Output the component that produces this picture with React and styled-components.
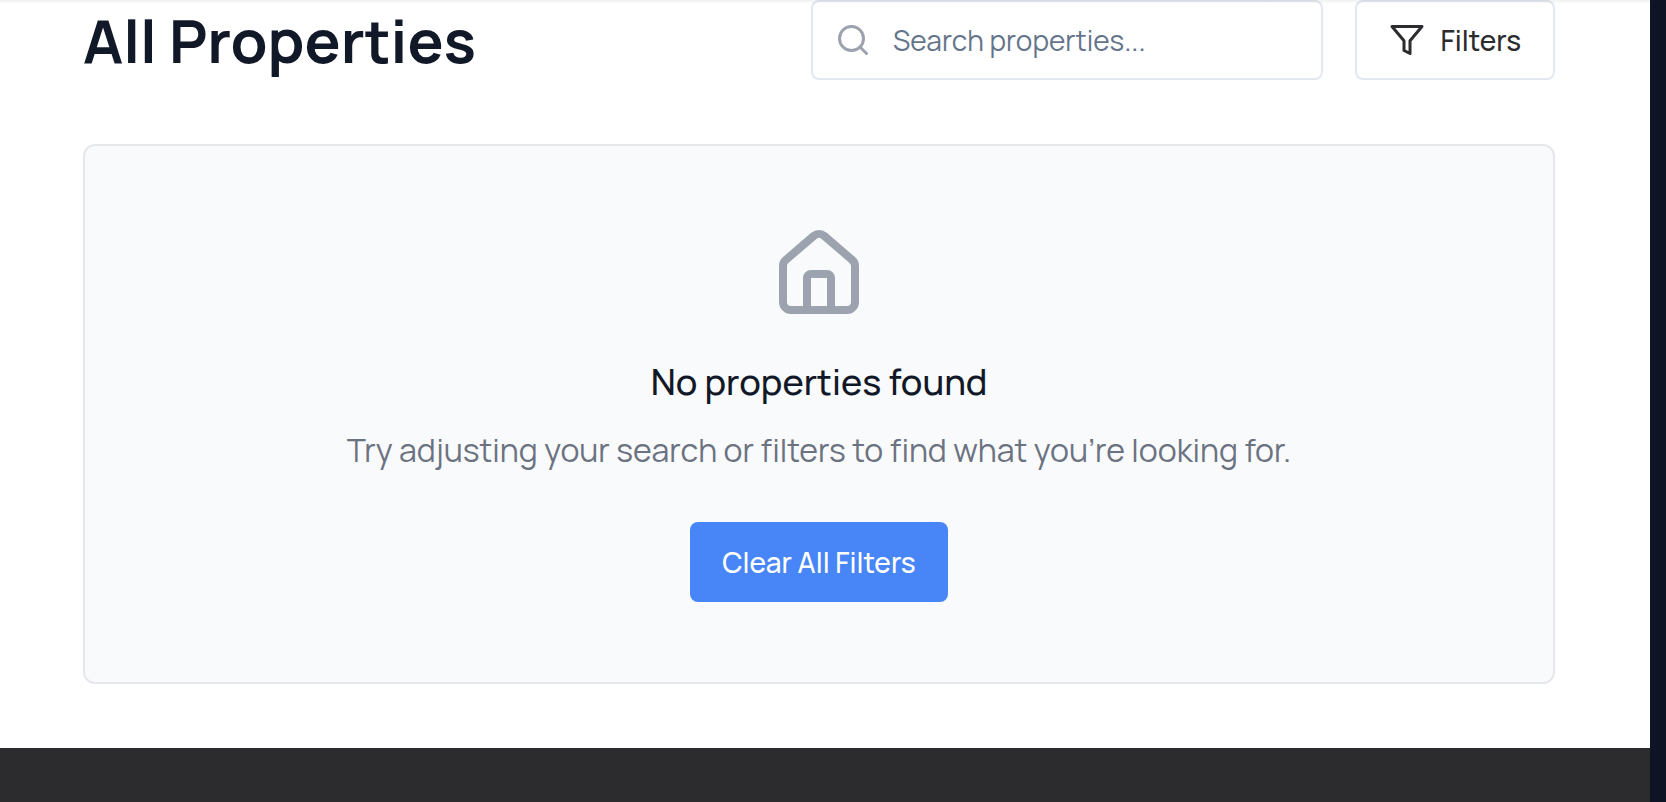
import React from "react";
import styled, { createGlobalStyle } from "styled-components";
import { House, Search } from "lucide-react";

const GlobalStyle = createGlobalStyle`
  *, *::before, *::after { box-sizing: border-box; }
  body {
    margin: 0;
    background: #0f1424;
    font-family: Manrope, Inter, "Liberation Sans", sans-serif;
    color: #111827;
  }
  h1, h2, p { margin: 0; }
  button, input { font: inherit; }
`;

const Page = styled.div`
  display: flex;
  flex-direction: column;
  min-height: 100vh;
  margin-right: 16px;
  background: #ffffff;
`;

const TopShade = styled.div`
  position: absolute;
  top: 0;
  left: 0;
  right: 16px;
  height: 4px;
  background: linear-gradient(rgba(0, 0, 0, 0.06), rgba(0, 0, 0, 0));
  pointer-events: none;
`;

const Content = styled.main`
  display: flex;
  flex-direction: column;
  gap: 64px;
  padding: 0 95px 64px 83px;
`;

const Header = styled.header`
  display: flex;
  align-items: center;
  justify-content: space-between;
  gap: 32px;
`;

const Title = styled.h1`
  font-size: 60px;
  line-height: 80px;
  font-weight: 700;
  white-space: nowrap;
`;

const Tools = styled.div`
  display: flex;
  flex: 0 1 744px;
  gap: 32px;
`;

const SearchBox = styled.label`
  display: flex;
  align-items: center;
  gap: 22px;
  flex: 1;
  min-width: 0;
  height: 80px;
  padding: 0 22px;
  border: 2px solid #e2e8f0;
  border-radius: 8px;
  color: #9ca3af;

  svg { flex: none; }
`;

const SearchInput = styled.input`
  flex: 1;
  min-width: 0;
  padding: 0;
  border: 0;
  outline: 0;
  background: transparent;
  color: #111827;
  font-size: 28px;
  line-height: 40px;

  &::placeholder { color: #64748b; opacity: 1; }
`;

const Button = styled.button`
  display: inline-flex;
  align-items: center;
  justify-content: center;
  gap: 16px;
  height: 80px;
  padding: 0 32px;
  border: ${(p) => (p.$primary ? "0" : "2px solid #e2e8f0")};
  border-radius: 8px;
  background: ${(p) => (p.$primary ? "#4886f8" : "transparent")};
  color: ${(p) => (p.$primary ? "#ffffff" : "#2c2c2e")};
  font-size: 28px;
  line-height: 40px;
  font-weight: 500;
  white-space: nowrap;
  cursor: pointer;
`;

const EmptyCard = styled.section`
  display: flex;
  flex-direction: column;
  align-items: center;
  padding: 80px 32px;
  border: 2px solid #e5e7eb;
  border-radius: 12px;
  background: #f9fafc;
  text-align: center;

  > svg { color: #9ca3af; }
`;

const EmptyTitle = styled.h2`
  margin-top: 32px;
  font-size: 36px;
  line-height: 56px;
  font-weight: 500;
`;

const EmptyText = styled.p`
  margin: 16px 0 48px;
  color: #6b7280;
  font-size: 32px;
  line-height: 48px;
`;

const Footer = styled.footer`
  flex: 1;
  min-height: 54px;
  background: #2c2c2e;
`;

const FilterIcon = () => (
  <svg
    width="36"
    height="36"
    viewBox="0 0 24 24"
    fill="none"
    stroke="currentColor"
    strokeWidth="2"
    strokeLinecap="round"
    strokeLinejoin="round"
    aria-hidden="true"
  >
    <polygon points="22 3 2 3 10 12.46 10 19 14 21 14 12.46 22 3" />
  </svg>
);

export default function App() {
  return (
    <>
      <GlobalStyle />
      <Page>
        <Content>
          <Header>
            <Title>All Properties</Title>
            <Tools>
              <SearchBox>
                <Search size={36} aria-hidden="true" />
                <SearchInput
                  type="text"
                  aria-label="Search properties"
                  placeholder="Search properties..."
                />
              </SearchBox>
              <Button type="button">
                <FilterIcon />
                Filters
              </Button>
            </Tools>
          </Header>
          <EmptyCard>
            <House size={96} aria-hidden="true" />
            <EmptyTitle>No properties found</EmptyTitle>
            <EmptyText>
              Try adjusting your search or filters to find what you’re looking for.
            </EmptyText>
            <Button type="button" $primary>
              Clear All Filters
            </Button>
          </EmptyCard>
        </Content>
        <Footer />
      </Page>
      <TopShade />
    </>
  );
}
